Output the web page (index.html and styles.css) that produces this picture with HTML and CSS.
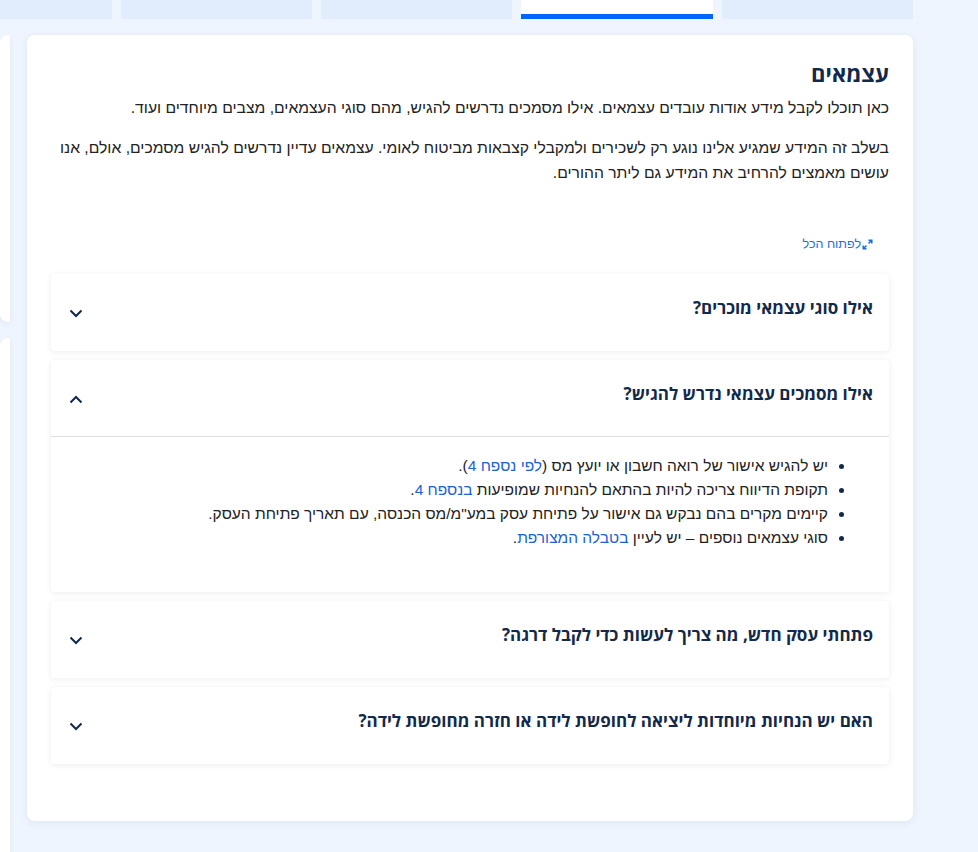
FILE: index.html
```html
<!DOCTYPE html>
<html lang="he" dir="rtl">
  <head>
    <meta charset="UTF-8" />
    <meta name="viewport" content="width=device-width, initial-scale=1.0" />
    <title>עצמאים</title>
    <link rel="stylesheet" href="styles.css">
  </head>
  <body>
    <!-- Tabs strip -->
    <div class="tabs">
      <div class="tab"></div>
      <div class="tab active"></div>
      <div class="tab"></div>
      <div class="tab"></div>
      <div class="tab first"></div>
    </div>

    <div class="layout">
      <div class="main-card">
        <h2>עצמאים</h2>
        <p>כאן תוכלו לקבל מידע אודות עובדים עצמאים. אילו מסמכים נדרשים להגיש, מהם סוגי העצמאים, מצבים מיוחדים ועוד.</p>
        <p>בשלב זה המידע שמגיע אלינו נוגע רק לשכירים ולמקבלי קצבאות מביטוח לאומי. עצמאים עדיין נדרשים להגיש מסמכים, אולם, אנו עושים מאמצים להרחיב את המידע גם ליתר ההורים.</p>

        <div class="expand-row">
          <a href="#" class="expand-link">
            <svg width="11" height="11" viewBox="0 0 11 11" aria-hidden="true">
              <path d="M6.5 1.2h3.3v3.3M9.8 1.2L6.6 4.4M4.5 9.8H1.2V6.5M1.2 9.8l3.2-3.2" fill="none" stroke="#1a6fe0" stroke-width="1.5" />
            </svg>
            לפתוח הכל
          </a>
        </div>

        <!-- Accordion -->
        <div class="accordion">
          <div class="acc-item">
            <div class="acc-header">
              <h3>אילו סוגי עצמאי מוכרים?</h3>
              <svg class="chevron" width="14" height="9" viewBox="0 0 14 9"><path d="M1.5 1.5l5.5 5.5 5.5-5.5" /></svg>
            </div>
          </div>

          <div class="acc-item open">
            <div class="acc-header">
              <h3>אילו מסמכים עצמאי נדרש להגיש?</h3>
              <svg class="chevron up" width="14" height="9" viewBox="0 0 14 9"><path d="M1.5 7.5l5.5-5.5 5.5 5.5" /></svg>
            </div>
            <div class="acc-body">
              <ul>
                <li>יש להגיש אישור של רואה חשבון או יועץ מס (<a href="#">לפי נספח 4</a>).</li>
                <li>תקופת הדיווח צריכה להיות בהתאם להנחיות שמופיעות <a href="#">בנספח 4</a>.</li>
                <li>קיימים מקרים בהם נבקש גם אישור על פתיחת עסק במע"מ/מס הכנסה, עם תאריך פתיחת העסק.</li>
                <li>סוגי עצמאים נוספים – יש לעיין <a href="#">בטבלה המצורפת</a>.</li>
              </ul>
            </div>
          </div>

          <div class="acc-item">
            <div class="acc-header">
              <h3>פתחתי עסק חדש, מה צריך לעשות כדי לקבל דרגה?</h3>
              <svg class="chevron" width="14" height="9" viewBox="0 0 14 9"><path d="M1.5 1.5l5.5 5.5 5.5-5.5" /></svg>
            </div>
          </div>

          <div class="acc-item">
            <div class="acc-header">
              <h3>האם יש הנחיות מיוחדות ליציאה לחופשת לידה או חזרה מחופשת לידה?</h3>
              <svg class="chevron" width="14" height="9" viewBox="0 0 14 9"><path d="M1.5 1.5l5.5 5.5 5.5-5.5" /></svg>
            </div>
          </div>
        </div>
      </div>

      <!-- side panels peeking in from the left -->
      <div class="side">
        <div class="side-box short"></div>
        <div class="side-box tall"></div>
      </div>
    </div>
  </body>
</html>
```

FILE: styles.css
```css
body {
  font-family: "Liberation Sans", Arial, sans-serif;
  background-color: #eef5fe;
  margin: 0;
  padding: 0;
  color: #222;
  overflow: hidden;
}

/* Tabs strip */
.tabs {
  display: flex;
  gap: 9px;
  height: 19px;
  padding-right: 65px;
}

.tab {
  width: 192px;
  background-color: #e1edfd;
}

.tab.first {
  width: 112px;
}

.tab.active {
  background-color: #fff;
  border-bottom: 5px solid #0066ff;
  box-sizing: border-box;
}

/* Layout */
.layout {
  display: flex;
  align-items: flex-start;
  gap: 17px;
  margin-top: 16px;
  padding-right: 65px;
}

.side {
  width: 10px;
  display: flex;
  flex-direction: column;
  gap: 16px;
}

.side-box {
  background-color: #fff;
  border-radius: 8px 0 0 8px;
  box-shadow: 0 2px 6px rgba(0, 40, 120, 0.06);
}

.side-box.short {
  height: 287px;
}

.side-box.tall {
  height: 600px;
}

.main-card {
  width: 886px;
  box-sizing: border-box;
  background-color: #fff;
  border-radius: 8px;
  box-shadow: 0 2px 8px rgba(0, 40, 120, 0.07);
  padding: 23px 24px 57px;
}

h2 {
  font-family: "Open Sans", "Liberation Sans", sans-serif;
  font-size: 22px;
  line-height: 30px;
  font-weight: 700;
  color: #13294b;
  margin: 0 0 7px;
}

.main-card p {
  font-size: 15.7px;
  line-height: 25px;
  margin: 0 0 15px;
}

.expand-row {
  padding: 36px 16px 19px 0;
  font-size: 12.5px;
  line-height: 17px;
}

.expand-link {
  display: inline-flex;
  align-items: center;
  gap: 1px;
  color: #1a6fe0;
  text-decoration: none;
}

/* Accordion */
.accordion {
  display: flex;
  flex-direction: column;
  gap: 9px;
}

.acc-item {
  background-color: #fff;
  border-radius: 4px;
  box-shadow: 0 1px 6px rgba(0, 30, 90, 0.08);
}

.acc-header {
  display: flex;
  align-items: flex-start;
  justify-content: space-between;
  box-sizing: border-box;
  height: 77px;
  padding: 23px 16px 0 18px;
}

.acc-header h3 {
  font-family: "Open Sans", "Liberation Sans", sans-serif;
  font-size: 17px;
  line-height: 22px;
  font-weight: 700;
  color: #13294b;
  margin: 0;
}

.acc-item.open .acc-header {
  border-bottom: 1px solid #dedfe6;
}

.chevron {
  margin-top: 12px;
}

.chevron path {
  fill: none;
  stroke: #13294b;
  stroke-width: 2;
}

.acc-body {
  padding: 17px 16px 42px;
}

.acc-body ul {
  margin: 0;
  padding: 0 45px 0 0;
  font-size: 15.5px;
  line-height: 24px;
}

.acc-body li::marker {
  color: #13294b;
}

.acc-body a {
  color: #1a62d6;
  text-decoration: none;
}
```
